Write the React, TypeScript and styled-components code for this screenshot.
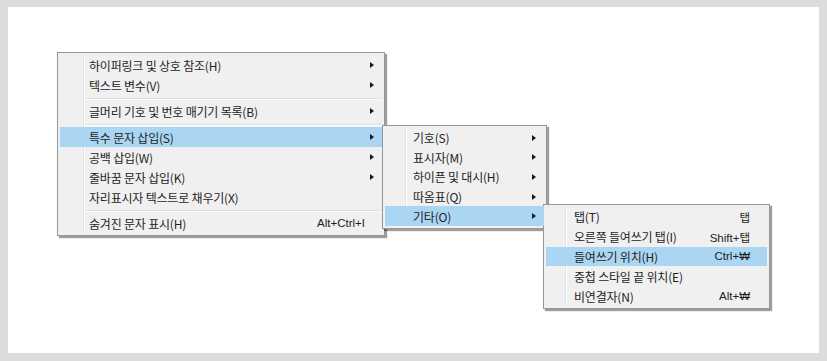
import React from "react";
import styled, { createGlobalStyle } from "styled-components";

const Global = createGlobalStyle`
  html, body { margin: 0; padding: 0; background: #ffffff; }
  * { box-sizing: border-box; }
`;

const Frame = styled.div`
  position: relative;
  width: 827px;
  height: 361px;
  background: #ffffff;
  border: 8px solid #dcdcdc;
  border-top-width: 7px;
  font-family: "Noto Sans CJK KR", "Noto Sans", sans-serif;
`;

const Menu = styled.div<{ $x: number; $y: number; $w: number; $gutter: number }>`
  position: absolute;
  left: ${(p) => p.$x - 8}px;
  top: ${(p) => p.$y - 7}px;
  width: ${(p) => p.$w}px;
  padding: 2px;
  background: #f0f0f0;
  border: 1px solid #979797;
  box-shadow: 2px 2px 1px rgba(0, 0, 0, 0.38);
  display: flex;
  flex-direction: column;
  &::before {
    content: "";
    position: absolute;
    top: 2px;
    bottom: 2px;
    left: ${(p) => p.$gutter}px;
    width: 1px;
    background: #e2e3e3;
    box-shadow: 1px 0 0 #ffffff;
  }
`;

const Row = styled.div<{ $active?: boolean; $pad: number; $h?: number }>`
  position: relative;
  z-index: 1;
  height: ${(p) => p.$h ?? 20}px;
  display: flex;
  align-items: center;
  padding-left: ${(p) => p.$pad}px;
  padding-right: 8px;
  font-size: 12px;
  color: #1e1e1e;
  white-space: nowrap;
  background: ${(p) => (p.$active ? "#aad6f3" : "transparent")};
`;

const Label = styled.span`
  flex: 1;
  letter-spacing: -0.2px;
`;

const Shortcut = styled.span`
  font-family: "Liberation Sans", "Noto Sans CJK KR", sans-serif;
  font-size: 11.5px;
  margin-right: 9px;
`;

const Arrow = styled.span`
  width: 0;
  height: 0;
  border-top: 3.5px solid transparent;
  border-bottom: 3.5px solid transparent;
  border-left: 4px solid #1a1a1a;
  margin-right: 0px;
`;

const Sep = styled.div<{ $pad: number }>`
  height: 6px;
  display: flex;
  align-items: center;
  padding-left: ${(p) => p.$pad - 2}px;
  &::after {
    content: "";
    flex: 1;
    height: 1px;
    background: #e0e0e0;
    box-shadow: 0 1px 0 #ffffff;
  }
`;

type Item =
  | { sep: true }
  | { label: string; shortcut?: string; sub?: boolean; active?: boolean };

const MenuList: React.FC<{
  x: number;
  y: number;
  w: number;
  gutter: number;
  pad: number;
  h?: number;
  items: Item[];
}> = ({ x, y, w, gutter, pad, h, items }) => (
  <Menu $x={x} $y={y} $w={w} $gutter={gutter}>
    {items.map((it, i) =>
      "sep" in it ? (
        <Sep key={i} $pad={gutter} />
      ) : (
        <Row key={i} $active={it.active} $pad={pad} $h={h}>
          <Label>{it.label}</Label>
          {it.shortcut && <Shortcut>{it.shortcut}</Shortcut>}
          {it.sub && <Arrow />}
        </Row>
      )
    )}
  </Menu>
);

export default function App() {
  return (
    <>
      <Global />
      <Frame>
        <MenuList
          x={57}
          y={52}
          w={328}
          gutter={25}
          pad={29}
          items={[
            { label: "하이퍼링크 및 상호 참조(H)", sub: true },
            { label: "텍스트 변수(V)", sub: true },
            { sep: true },
            { label: "글머리 기호 및 번호 매기기 목록(B)", sub: true },
            { sep: true },
            { label: "특수 문자 삽입(S)", sub: true, active: true },
            { label: "공백 삽입(W)", sub: true },
            { label: "줄바꿈 문자 삽입(K)", sub: true },
            { label: "자리표시자 텍스트로 채우기(X)" },
            { sep: true },
            { label: "숨겨진 문자 표시(H)", shortcut: "Alt+Ctrl+I" },
          ]}
        />
        <MenuList
          x={382}
          y={125}
          w={165}
          gutter={22}
          pad={28}
          h={19.6}
          items={[
            { label: "기호(S)", sub: true },
            { label: "표시자(M)", sub: true },
            { label: "하이픈 및 대시(H)", sub: true },
            { label: "따옴표(Q)", sub: true },
            { label: "기타(O)", sub: true, active: true },
          ]}
        />
        <MenuList
          x={543}
          y={204}
          w={227}
          gutter={21}
          pad={28}
          h={19.8}
          items={[
            { label: "탭(T)", shortcut: "탭" },
            { label: "오른쪽 들여쓰기 탭(I)", shortcut: "Shift+탭" },
            { label: "들여쓰기 위치(H)", shortcut: "Ctrl+₩", active: true },
            { label: "중첩 스타일 끝 위치(E)" },
            { label: "비연결자(N)", shortcut: "Alt+₩" },
          ]}
        />
      </Frame>
    </>
  );
}
